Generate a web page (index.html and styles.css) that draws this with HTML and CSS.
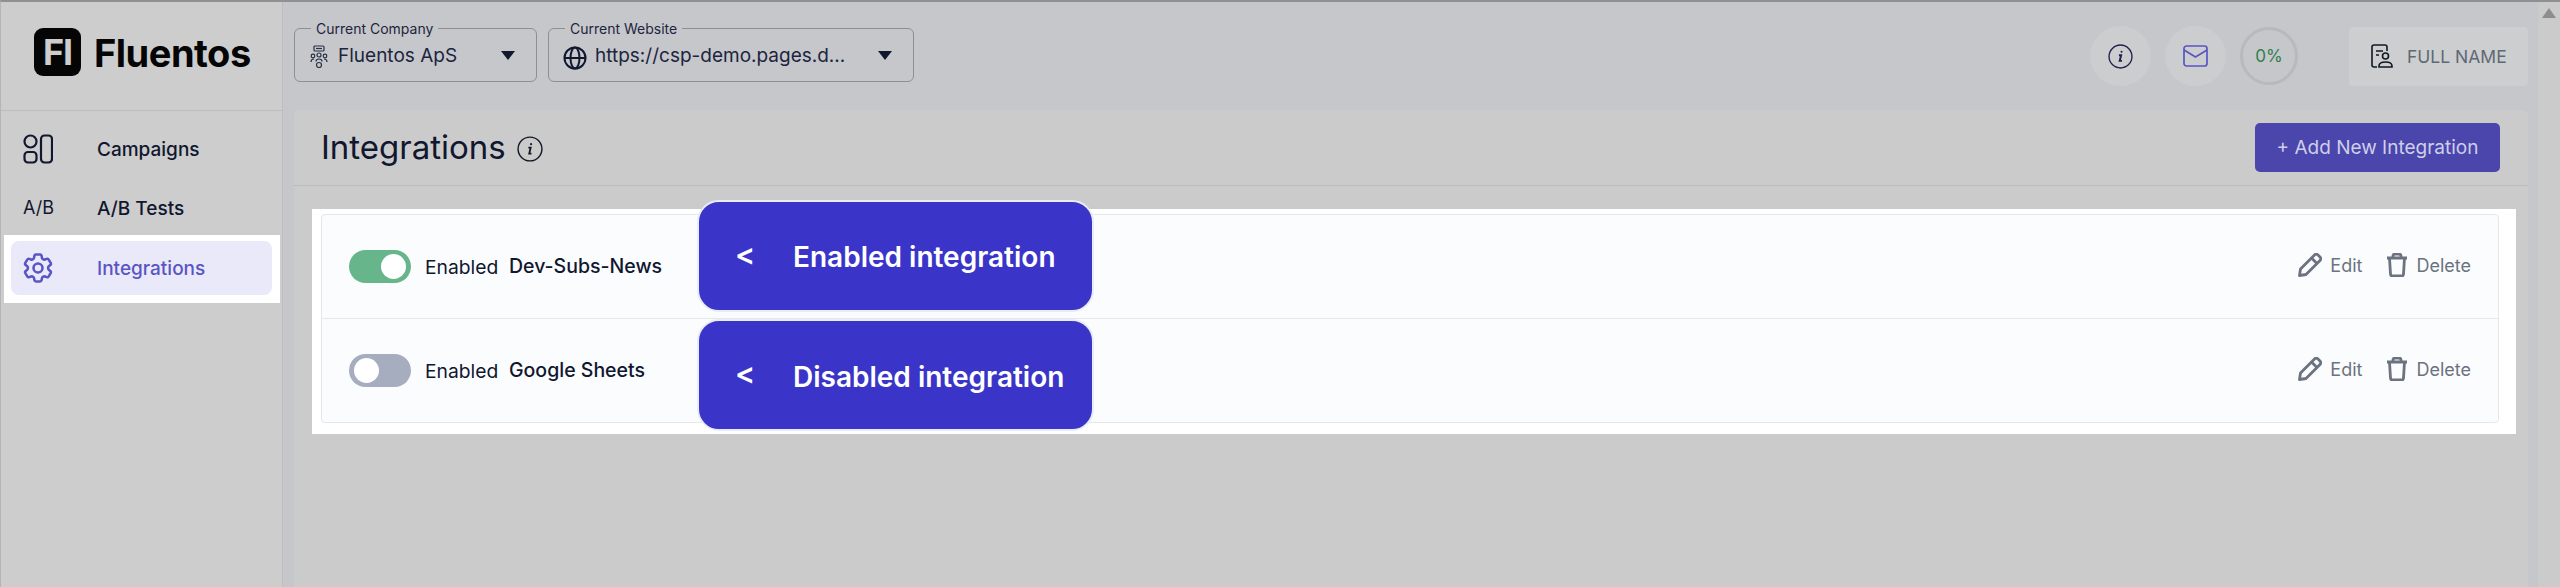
FILE: index.html
```html
<!DOCTYPE html>
<html lang="en">
<head>
  <meta charset="UTF-8">
  <meta name="viewport" content="width=device-width,initial-scale=1.0">
  <title>Integrations</title>
  <link rel="stylesheet" href="styles.css">
</head>
<body>
  <div class="app">
    <aside class="sidebar">
      <div class="logo">
        <span class="logoMark">FI</span>
        <span class="logoText">Fluentos</span>
      </div>
      <nav class="nav">
        <a class="navItem">
          <svg class="navIcon" viewBox="0 0 30 30" fill="none" stroke="#10172f" stroke-width="2.2">
            <circle cx="7.5" cy="7.5" r="6"/>
            <rect x="1.5" y="18" width="12" height="10.500" rx="3.500"/>
            <rect x="18" y="1.500" width="11" height="27" rx="3.500"/>
          </svg>
          <span>Campaigns</span>
        </a>
        <a class="navItem">
          <span class="navIcon abIcon">A/B</span>
          <span>A/B Tests</span>
        </a>
        <div class="navSpot">
          <a class="navItem active">
            <svg class="navIcon" viewBox="2 2.500 20 19" preserveAspectRatio="xMidYMid meet" fill="none" stroke="#5a55c4" stroke-width="1.700">
              <path d="M9.594 3.94c.09-.542.56-.94 1.11-.94h2.593c.55 0 1.02.398 1.11.94l.213 1.281c.063.374.313.686.645.87.074.04.147.083.22.127.324.196.72.257 1.075.124l1.217-.456a1.125 1.125 0 011.37.49l1.296 2.247a1.125 1.125 0 01-.26 1.431l-1.003.827c-.293.24-.438.613-.431.992a6.759 6.759 0 010 .255c-.007.378.138.75.43.99l1.005.828c.424.35.534.954.26 1.43l-1.298 2.247a1.125 1.125 0 01-1.369.491l-1.217-.456c-.355-.133-.75-.072-1.076.124a6.57 6.57 0 01-.22.128c-.331.183-.581.495-.644.869l-.213 1.28c-.09.543-.56.941-1.11.941h-2.594c-.55 0-1.02-.398-1.11-.94l-.213-1.281c-.062-.374-.312-.686-.644-.87a6.52 6.52 0 01-.22-.127c-.325-.196-.72-.257-1.076-.124l-1.217.456a1.125 1.125 0 01-1.369-.49l-1.297-2.247a1.125 1.125 0 01.26-1.431l1.004-.827c.292-.24.437-.613.43-.992a6.932 6.932 0 010-.255c.007-.378-.138-.75-.43-.99l-1.004-.828a1.125 1.125 0 01-.26-1.43l1.297-2.247a1.125 1.125 0 011.37-.491l1.216.456c.356.133.751.072 1.076-.124.072-.044.146-.087.22-.128.332-.183.582-.495.644-.869l.214-1.281z"/>
              <path d="M15 12a3 3 0 11-6 0 3 3 0 016 0z"/>
            </svg>
            <span>Integrations</span>
          </a>
        </div>
      </nav>
    </aside>

    <div class="main">
      <header class="topbar">
        <div class="picker companyPicker">
          <span class="pickerLabel">Current Company</span>
          <svg class="pickerIcon" viewBox="0 0 18 24" fill="none" stroke="#2a3045" stroke-width="1.200">
            <rect x="4" y="1" width="10" height="5" rx="1"/>
            <path d="M6 3.500h6"/>
            <circle cx="9" cy="10" r="2"/>
            <circle cx="3" cy="11" r="1.800"/>
            <circle cx="15" cy="11" r="1.800"/>
            <path d="M1 17c0-2 1-3 3-3M17 17c0-2-1-3-3-3M6 16.500c0-1.500 1-2.500 3-2.500s3 1 3 2.500"/>
            <circle cx="9" cy="20" r="2.500"/>
          </svg>
          <span class="pickerValue">Fluentos ApS</span>
          <span class="caret"></span>
        </div>
        <div class="picker sitePicker">
          <span class="pickerLabel">Current Website</span>
          <svg class="pickerIcon globe" viewBox="0 0 24 24" fill="none" stroke="#10172f" stroke-width="2">
            <circle cx="12" cy="12" r="10.500"/>
            <ellipse cx="12" cy="12" rx="4.500" ry="10.500"/>
            <path d="M1.500 12h21"/>
          </svg>
          <span class="pickerValue">https://csp-demo.pages.d...</span>
          <span class="caret"></span>
        </div>
        <div class="topRight">
          <span class="roundBtn">
            <svg width="25" height="25" viewBox="0 0 24 24" fill="none" stroke="#1f2050" stroke-width="1.300">
              <circle cx="12" cy="12" r="11"/>
              <path d="M10.500 10.800h2.100l-1.300 5.400h2.100" stroke-width="1.900"/>
              <circle cx="13" cy="7.500" r="1" fill="#1f2050" stroke="none"/>
            </svg>
          </span>
          <span class="roundBtn">
            <svg width="25" height="22" viewBox="0 0 25 22" fill="none" stroke="#5a55c4" stroke-width="1.700">
              <rect x="1" y="1" width="23" height="20" rx="2.500"/>
              <path d="M1 5l11.500 7L24 5"/>
            </svg>
          </span>
          <span class="progress">0%</span>
          <div class="profile">
            <svg width="23" height="24" viewBox="0 0 23 24" fill="none" stroke="#111827" stroke-width="1.600">
              <path d="M6 23H3a2 2 0 01-2-2V3a2 2 0 012-2h11a2 2 0 012 2v4"/>
              <path d="M5 7h7M5 11h3"/>
              <circle cx="14.500" cy="12" r="3"/>
              <path d="M8 23v-1c0-3 3-4 6.500-4s6.500 1 6.500 4v1z"/>
            </svg>
            <span>FULL NAME</span>
          </div>
        </div>
      </header>

      <section class="panel">
        <div class="panelHead">
          <h1>Integrations</h1>
          <svg class="titleInfo" width="26" height="26" viewBox="0 0 24 24" fill="none" stroke="#111827" stroke-width="1.300">
            <circle cx="12" cy="12" r="11"/>
            <path d="M10.500 10.800h2.100l-1.300 5.400h2.100" stroke-width="1.700"/>
            <circle cx="13" cy="7.500" r="1" fill="#111827" stroke="none"/>
          </svg>
          <button class="addBtn" type="button">+ Add New Integration</button>
        </div>
        <div class="panelBody">
          <div class="listSpot">
            <div class="card">
              <div class="row">
                <span class="toggle on"><i></i></span>
                <span class="stateText">Enabled</span>
                <span class="rowName">Dev-Subs-News</span>
                <div class="rowActions">
                  <a class="action">
                    <svg class="pencil" viewBox="0 0 24 24" fill="none" stroke="#6b7280" stroke-width="2.800" stroke-linejoin="round">
                      <path d="M1.500 22.500l1-6.500L16.500 2a2.500 2.500 0 013.500 0l2 2a2.500 2.500 0 010 3.500L8 21.500z"/>
                      <path d="M13.500 5l5.500 5.500"/>
                    </svg>
                    Edit
                  </a>
                  <a class="action">
                    <svg class="trash" viewBox="0 0 22 24" fill="none" stroke="#6b7280" stroke-width="2.800">
                      <path d="M1 5h20M7 5V3a2 2 0 012-2h4a2 2 0 012 2v2"/>
                      <path d="M3.500 5l1 16a2 2 0 002 2h9a2 2 0 002-2l1-16"/>
                    </svg>
                    Delete
                  </a>
                </div>
              </div>
              <div class="row">
                <span class="toggle"><i></i></span>
                <span class="stateText">Enabled</span>
                <span class="rowName">Google Sheets</span>
                <div class="rowActions">
                  <a class="action">
                    <svg class="pencil" viewBox="0 0 24 24" fill="none" stroke="#6b7280" stroke-width="2.800" stroke-linejoin="round">
                      <path d="M1.500 22.500l1-6.500L16.500 2a2.500 2.500 0 013.500 0l2 2a2.500 2.500 0 010 3.500L8 21.500z"/>
                      <path d="M13.500 5l5.500 5.500"/>
                    </svg>
                    Edit
                  </a>
                  <a class="action">
                    <svg class="trash" viewBox="0 0 22 24" fill="none" stroke="#6b7280" stroke-width="2.800">
                      <path d="M1 5h20M7 5V3a2 2 0 012-2h4a2 2 0 012 2v2"/>
                      <path d="M3.500 5l1 16a2 2 0 002 2h9a2 2 0 002-2l1-16"/>
                    </svg>
                    Delete
                  </a>
                </div>
              </div>
            </div>
            <div class="tip tipOne"><b>&lt;</b><span>Enabled integration</span></div>
            <div class="tip tipTwo"><b>&lt;</b><span>Disabled integration</span></div>
          </div>
        </div>
      </section>
    </div>

    <div class="scrollTrack"><span class="scrollUp"></span></div>
  </div>
</body>
</html>
```

FILE: styles.css
```css
html,body
{
  margin:0;
  height:100%;
  overflow:hidden;
}
body
{
  font-family:Inter,"Liberation Sans",sans-serif;
  color:#10172f;
  background-color:#cbcbcb;
}
.app
{
  display:flex;
  height:100%;
  box-sizing:border-box;
  border-top:2px solid #8f9093;
  border-left:1px solid #b5b5b5;
}
.sidebar
{
  width:281px;
  flex:none;
  border-right:1px solid #bdbdbd;
  background-color:#cdcdcd;
}
.logo
{
  height:109px;
  box-sizing:border-box;
  border-bottom:1px solid #bdbdbd;
  padding:26px 0 0 33px;
  display:flex;
  align-items:flex-start;
}
.logoMark
{
  width:47px;
  height:48px;
  border-radius:9px;
  background-color:#050505;
  color:#cdcdcd;
  font-size:36px;
  font-weight:700;
  letter-spacing:-1px;
  line-height:48px;
  text-align:center;
}
.logoText
{
  margin-left:13px;
  font-size:38px;
  font-weight:700;
  line-height:50px;
  letter-spacing:-.5px;
  color:#050505;
}
.nav
{
  padding-top:11px;
}
.navItem
{
  display:flex;
  align-items:center;
  height:54px;
  margin-bottom:5px;
  padding-left:22px;
  font-size:19px;
  font-weight:500;
}
.navIcon
{
  width:30px;
  height:30px;
  flex:none;
  margin-right:44px;
}
.abIcon
{
  font-size:18px;
  font-weight:400;
  line-height:30px;
  white-space:nowrap;
}
.navSpot
{
  margin:-5px 2px 0 3px;
  padding:6px 8px 8px 7px;
  background-color:#fff;
}
.navSpot .navItem
{
  margin:0;
  padding-left:12px;
  border-radius:8px;
  background-color:#e9e9f9;
  color:#5a55c4;
}
.main
{
  flex:1;
  min-width:0;
  display:flex;
  flex-direction:column;
  padding:0 10px 0 11px;
  background-color:#c6c7ca;
}
.topbar
{
  height:108px;
  flex:none;
  display:flex;
  align-items:flex-start;
  padding-top:26px;
  box-sizing:border-box;
  gap:11px;
}
.picker
{
  position:relative;
  height:54px;
  box-sizing:border-box;
  border:1px solid #8e8f93;
  border-radius:6px;
  display:flex;
  align-items:center;
  color:#1d2440;
  font-size:19px;
}
.companyPicker
{
  width:243px;
}
.sitePicker
{
  width:366px;
}
.pickerLabel
{
  position:absolute;
  top:-9px;
  left:16px;
  padding:0 5px;
  font-size:14px;
  line-height:17px;
  background-color:#c6c7ca;
}
.pickerIcon
{
  width:18px;
  height:24px;
  margin:3px 10px 0 15px;
  flex:none;
}
.globe
{
  width:24px;
  margin:6px 8px 0 14px;
}
.pickerValue
{
  white-space:nowrap;
}
.caret
{
  margin-left:auto;
  margin-right:21px;
  border-left:7px solid transparent;
  border-right:7px solid transparent;
  border-top:9px solid #10172f;
}
.topRight
{
  margin-left:auto;
  display:flex;
  align-items:center;
  gap:14px;
  height:60px;
  margin-top:-2px;
}
.roundBtn
{
  width:61px;
  height:60px;
  border-radius:50%;
  background-color:#cccdcf;
  display:flex;
  align-items:center;
  justify-content:center;
}
.progress
{
  width:58px;
  height:58px;
  box-sizing:border-box;
  border:3px solid #b8b9ba;
  border-radius:50%;
  font-size:17px;
  color:#2f7f4f;
  display:flex;
  align-items:center;
  justify-content:center;
}
.profile
{
  margin-left:37px;
  width:179px;
  height:59px;
  box-sizing:border-box;
  padding-left:22px;
  border-radius:4px;
  background-color:#cdcecf;
  display:flex;
  align-items:center;
  gap:13px;
  font-size:17.500px;
  color:#5f6875;
}
.panel
{
  flex:1;
  background-color:#cbcbcb;
  border-radius:6px 6px 0 0;
}
.panelHead
{
  height:76px;
  box-sizing:border-box;
  border-bottom:1px solid #bcbcbc;
  display:flex;
  align-items:center;
  padding:0 28px 0 27px;
}
h1
{
  margin:-2px 0 0;
  font-size:33px;
  font-weight:400;
  line-height:40px;
}
.titleInfo
{
  margin:2px 0 0 11px;
}
.addBtn
{
  margin-left:auto;
  width:245px;
  height:49px;
  border:none;
  border-radius:5px;
  background-color:#4a46ac;
  color:#cfcfea;
  font-family:inherit;
  font-size:19px;
  cursor:pointer;
}
.panelBody
{
  padding:23px 12px 0 18px;
}
.listSpot
{
  position:relative;
  padding:5px 17px 11px 9px;
  background-color:#fff;
}
.card
{
  border:1px solid #e5e7eb;
  border-radius:4px;
  background-color:#fbfcfe;
}
.row
{
  height:103px;
  box-sizing:border-box;
  display:flex;
  align-items:center;
  padding:0 27px;
  font-size:19.300px;
}
.row + .row
{
  border-top:1px solid #e5e7eb;
  height:104px;
}
.toggle
{
  width:62px;
  height:33px;
  flex:none;
  border-radius:17px;
  background-color:#67b58b;
  display:flex;
  align-items:center;
  justify-content:flex-end;
  padding:0 5px;
  box-sizing:border-box;
  margin-right:14px;
}
.toggle i
{
  width:25px;
  height:25px;
  border-radius:50%;
  background-color:#fff;
}
.toggle:not(.on)
{
  background-color:#a6adbf;
  justify-content:flex-start;
}
.stateText
{
  width:84px;
  flex:none;
}
.rowName
{
  font-size:19.500px;
  font-weight:500;
  margin-top:-2px;
}
.rowActions
{
  margin-left:auto;
  margin-top:-3px;
  display:flex;
  gap:24px;
  font-size:18px;
}
.action
{
  display:flex;
  align-items:center;
  gap:8px;
  color:#6b7280;
}
.pencil
{
  width:24px;
  height:24px;
}
.trash
{
  width:22px;
  height:24px;
}
.tip
{
  position:absolute;
  left:385px;
  width:397px;
  height:112px;
  box-sizing:border-box;
  border:2px solid #e8ecf8;
  border-radius:22px;
  background-color:#3a35c8;
  color:#fff;
  display:flex;
  align-items:center;
  padding-left:36px;
  font-size:28px;
  font-weight:600;
}
.tip b
{
  width:58px;
  flex:none;
  font-size:30px;
  font-weight:600;
  margin-top:-4px;
}
.tip span
{
  margin-top:2px;
  white-space:nowrap;
}
.tipOne
{
  top:-9px;
}
.tipTwo
{
  top:110px;
}
.tipTwo span
{
  margin-top:4px;
}
.scrollTrack
{
  width:22px;
  flex:none;
  background-color:#cbcbcb;
  display:flex;
  justify-content:center;
  padding-top:6px;
  box-sizing:border-box;
}
.scrollUp
{
  width:0;
  height:0;
  border-left:7px solid transparent;
  border-right:7px solid transparent;
  border-bottom:10px solid #8d8d8d;
}
```
